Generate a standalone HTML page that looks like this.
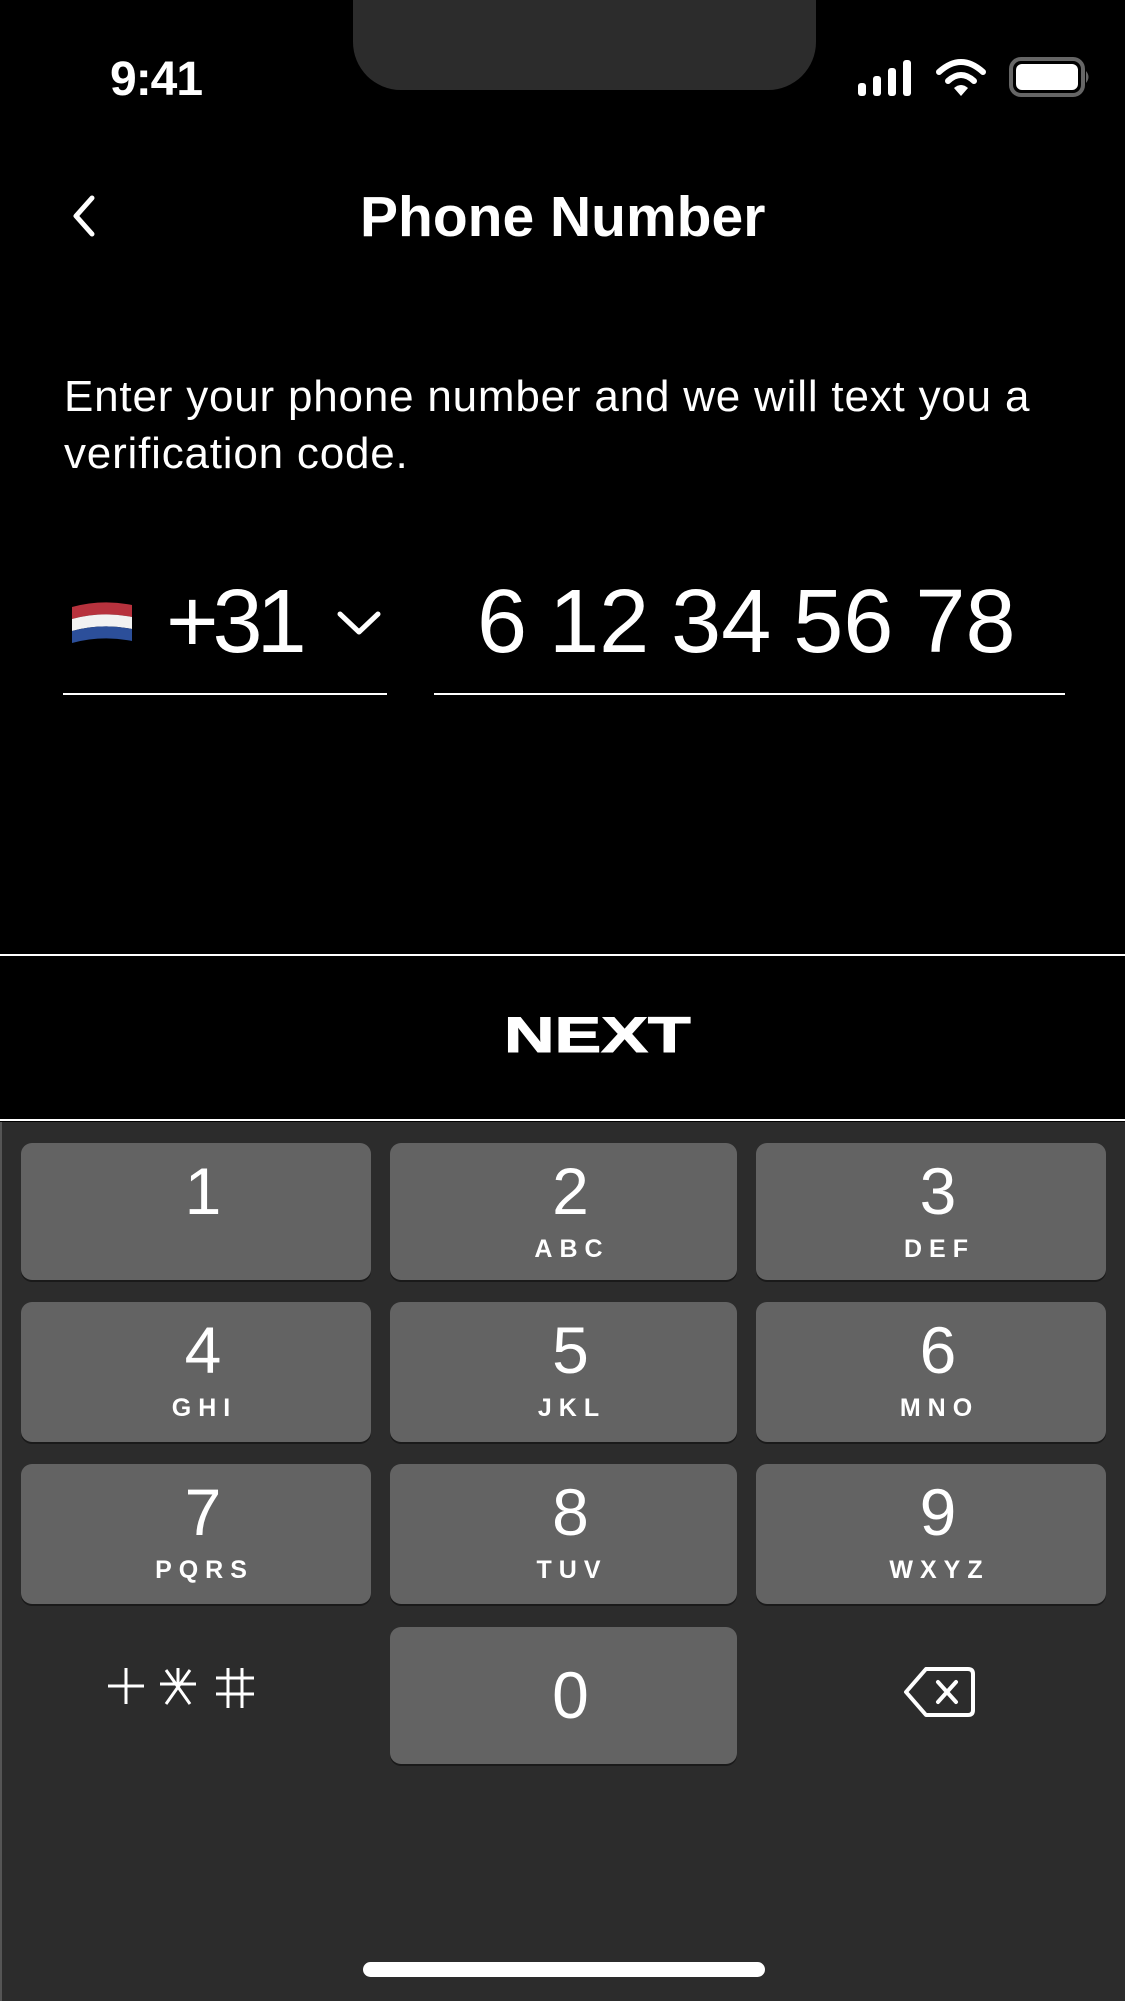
<!DOCTYPE html>
<html><head><meta charset="utf-8"><style>
html,body{margin:0;padding:0;background:#000;}
body{width:1125px;height:2001px;position:relative;overflow:hidden;font-family:"Liberation Sans",sans-serif;color:#fff;}
.a{position:absolute;}
.notch{left:353px;top:-20px;width:463px;height:110px;background:#2c2c2c;border-radius:0 0 48px 48px;}
.key{position:absolute;background:#636363;border-radius:11px;box-shadow:0 2px 0 #1a1a1a;text-align:center;}
.key .d{position:absolute;left:14px;right:0;top:8px;font-size:66px;line-height:80px;font-weight:300;}
.key .l{position:absolute;left:10px;right:0;top:91px;font-size:25px;font-weight:bold;letter-spacing:7px;text-indent:7px;line-height:30px;}
</style></head><body>
<div class="a notch"></div>
<div class="a" style="left:110px;top:52px;font-size:48px;font-weight:bold;line-height:56px;letter-spacing:-1px">9:41</div>
<svg class="a" style="left:850px;top:50px" width="250" height="55" viewBox="850 50 250 55">
<rect x="858" y="83" width="8" height="13" rx="3" fill="#fff"/>
<rect x="873" y="76" width="8" height="20" rx="3" fill="#fff"/>
<rect x="888" y="68" width="8" height="28" rx="3" fill="#fff"/>
<rect x="903" y="60" width="8" height="36" rx="3" fill="#fff"/>
<path d="M939 72 Q961 52 983 72" stroke="#fff" stroke-width="6" fill="none" stroke-linecap="round"/>
<path d="M948 81 Q961 69 974 81" stroke="#fff" stroke-width="6" fill="none" stroke-linecap="round"/>
<path d="M954 88 L961 96 L968 88 Q961 82 954 88Z" fill="#fff"/>
<rect x="1011" y="59" width="72" height="36" rx="10" fill="none" stroke="#666" stroke-width="4"/>
<rect x="1016" y="64" width="62" height="26" rx="6" fill="#fff"/>
<path d="M1086 71 Q1091 77 1086 83Z" fill="#666"/>
</svg>
<svg class="a" style="left:66px;top:192px" width="36" height="48" viewBox="0 0 36 48"><path d="M26 6 L10 24 L26 42" stroke="#fff" stroke-width="5" fill="none" stroke-linecap="round" stroke-linejoin="round"/></svg>
<div class="a" style="left:360px;top:182px;font-size:57px;line-height:70px;letter-spacing:0px;font-weight:bold;">Phone Number</div>
<div class="a" style="left:64px;top:368px;font-size:44px;line-height:57px;letter-spacing:0.8px;width:1060px;white-space:nowrap">Enter your phone number and we will text you a<br>verification code.</div>
<svg class="a" style="left:70px;top:601px" width="64" height="44" viewBox="0 0 64 44">
<path d="M2 6 Q32 -2 62 4 L62 16 Q32 10 2 18Z" fill="#b7323d"/>
<path d="M2 18 Q32 10 62 16 L62 28 Q32 22 2 30Z" fill="#f2f2f2"/>
<path d="M2 30 Q32 22 62 28 L62 40 Q32 34 2 42Z" fill="#2c4f9a"/>
</svg>
<div class="a" style="left:166px;top:572px;font-size:90px;line-height:100px;letter-spacing:-6px">+31</div>
<svg class="a" style="left:336px;top:608px" width="46" height="30" viewBox="0 0 46 30"><path d="M4 6 L23 24 L42 6" stroke="#fff" stroke-width="5" fill="none" stroke-linecap="round" stroke-linejoin="round"/></svg>
<div class="a" style="left:477px;top:572px;font-size:90px;line-height:100px;letter-spacing:0px;word-spacing:-3px">6 12 34 56 78</div>
<div class="a" style="left:63px;top:693px;width:324px;height:2px;background:#fff"></div>
<div class="a" style="left:434px;top:693px;width:631px;height:2px;background:#fff"></div>
<div class="a" style="left:0;top:954px;width:1125px;height:2px;background:#fff"></div>
<div class="a" style="left:504px;width:183px;top:1013px;height:42px;overflow:visible;"><div style="font-size:50px;line-height:44px;font-weight:900;letter-spacing:0px;transform:scaleX(1.4);transform-origin:0 0;white-space:nowrap;-webkit-text-stroke:1px #fff">NEXT</div></div>
<div class="a" style="left:0;top:1119px;width:1125px;height:2px;background:#fff"></div>
<div class="a" style="left:0;top:1122px;width:1125px;height:879px;background:#2c2c2c;border-left:2px solid #555;box-sizing:border-box"></div>
<div class="key" style="left:21px;top:1143px;width:350px;height:137px"><div class="d">1</div></div>
<div class="key" style="left:390px;top:1143px;width:347px;height:137px"><div class="d">2</div><div class="l">ABC</div></div>
<div class="key" style="left:756px;top:1143px;width:350px;height:137px"><div class="d">3</div><div class="l">DEF</div></div>
<div class="key" style="left:21px;top:1302px;width:350px;height:140px"><div class="d">4</div><div class="l">GHI</div></div>
<div class="key" style="left:390px;top:1302px;width:347px;height:140px"><div class="d">5</div><div class="l">JKL</div></div>
<div class="key" style="left:756px;top:1302px;width:350px;height:140px"><div class="d">6</div><div class="l">MNO</div></div>
<div class="key" style="left:21px;top:1464px;width:350px;height:140px"><div class="d">7</div><div class="l">PQRS</div></div>
<div class="key" style="left:390px;top:1464px;width:347px;height:140px"><div class="d">8</div><div class="l">TUV</div></div>
<div class="key" style="left:756px;top:1464px;width:350px;height:140px"><div class="d">9</div><div class="l">WXYZ</div></div>
<div class="key" style="left:390px;top:1627px;width:347px;height:137px"><div class="d" style="top:28px">0</div></div>
<svg class="a" style="left:104px;top:1660px" width="156" height="54" viewBox="0 0 156 54" stroke="#fff" stroke-width="3" fill="none">
<path d="M4 26 H40 M22 8 V44"/>
<path d="M56 24 H92 M74 8 V24 M62 44 L86 10 M62 10 L86 44"/>
<path d="M112 18 H150 M112 34 H150 M124 8 V48 M138 8 V48"/>
</svg>
<svg class="a" style="left:902px;top:1664px" width="76" height="56" viewBox="0 0 76 56" stroke="#fff" stroke-width="4" fill="none" stroke-linejoin="round" stroke-linecap="round">
<path d="M24 5 H66 Q71 5 71 10 V46 Q71 51 66 51 H24 L4 28 Z"/>
<path d="M36 18 L54 38 M54 18 L36 38"/>
</svg>
<div class="a" style="left:363px;top:1962px;width:402px;height:15px;border-radius:8px;background:#fff"></div>
</body></html>
